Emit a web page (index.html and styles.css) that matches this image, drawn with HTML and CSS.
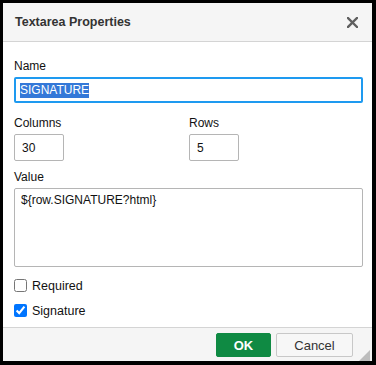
FILE: index.html
```html
<!DOCTYPE html>
<html>
<head>
    <title>Textarea Properties</title>
    <link rel="stylesheet" href="styles.css">
</head>
<body>
    <div class="dialog">
        <div class="dialog-header">
            <span class="dialog-title">Textarea Properties</span>
            <span class="dialog-close">
                <svg width="11" height="11" viewBox="0 0 11 11">
                    <path d="M1 1 L10 10 M10 1 L1 10" stroke="#5f5f5f" stroke-width="2.4" stroke-linecap="square"/>
                </svg>
            </span>
        </div>

        <div class="dialog-body">
            <div class="field">
                <label class="field-label">Name</label>
                <div class="text-input focused"><span class="selected">SIGNATURE</span></div>
            </div>

            <div class="field-row">
                <div class="field">
                    <label class="field-label">Columns</label>
                    <input class="small-input" type="text" value="30">
                </div>
                <div class="field">
                    <label class="field-label">Rows</label>
                    <input class="small-input" type="text" value="5">
                </div>
            </div>

            <div class="field value-field">
                <label class="field-label">Value</label>
                <textarea class="value-input">${row.SIGNATURE?html}</textarea>
            </div>

            <label class="check-row first">
                <input type="checkbox">
                <span>Required</span>
            </label>
            <label class="check-row">
                <input type="checkbox" checked>
                <span>Signature</span>
            </label>
        </div>

        <div class="dialog-footer">
            <button class="btn btn-ok">OK</button>
            <button class="btn btn-cancel">Cancel</button>
        </div>

        <div class="resize-grip"></div>
    </div>
</body>
</html>
```

FILE: styles.css
```css
* {
    box-sizing: border-box;
}
body {
    margin: 0;
    width: 376px;
    height: 365px;
    padding: 3px 4px 4px 3px;
    background: #000;
    font-family: "Liberation Sans", Arial, sans-serif;
    font-size: 12px;
    color: #111;
}
.dialog {
    position: relative;
    height: 358px;
    background: #fff;
    display: flex;
    flex-direction: column;
}
.dialog-header {
    height: 39px;
    flex: none;
    display: flex;
    align-items: center;
    justify-content: space-between;
    padding: 0 14px 0 12px;
    background: #f5f5f5;
    border-bottom: 1px solid #d4d4d4;
}
.dialog-title {
    font-size: 12.5px;
    font-weight: bold;
    color: #333;
}
.dialog-close {
    display: flex;
    width: 11px;
    height: 11px;
}
.dialog-body {
    flex: 1;
    padding: 17px 9px 0 11px;
}
.field-label {
    display: block;
    line-height: 15px;
    margin-bottom: 3px;
    color: #111;
}
.text-input {
    height: 26px;
    padding: 0 5px;
    display: flex;
    align-items: center;
    border: 1px solid #b5b5b5;
    border-radius: 2px;
}
.text-input.focused {
    border: 2px solid #1e9af0;
    padding: 0 4px;
}
.selected {
    background: #3478d8;
    color: #fff;
    line-height: 15px;
}
.field-row {
    display: grid;
    grid-template-columns: 175px 1fr;
    margin-top: 13px;
}
.small-input {
    display: block;
    width: 50px;
    height: 27px;
    padding: 0 7px;
    border: 1px solid #b5b5b5;
    border-radius: 2px;
    font-family: inherit;
    font-size: 12px;
    color: #111;
    outline: none;
}
.value-field {
    margin-top: 9px;
}
.value-input {
    display: block;
    width: 100%;
    height: 79px;
    padding: 4px 6px;
    border: 1px solid #b5b5b5;
    border-radius: 2px;
    font-family: inherit;
    font-size: 12px;
    line-height: 15px;
    color: #111;
    resize: none;
    outline: none;
}
.check-row {
    display: flex;
    align-items: center;
    gap: 5px;
    height: 13px;
    margin-top: 12px;
    font-size: 12.5px;
}
.check-row input {
    width: 13px;
    height: 13px;
    margin: 0;
}
.dialog-footer {
    height: 34px;
    flex: none;
    display: flex;
    justify-content: flex-end;
    gap: 5px;
    padding: 5px 19px 0 0;
    background: #f5f5f5;
    border-top: 1px solid #d4d4d4;
}
.btn {
    height: 24px;
    border-radius: 2px;
    font-family: inherit;
    font-size: 13px;
    cursor: pointer;
}
.btn-ok {
    width: 55px;
    background: #0f8a43;
    border: 1px solid #0f8a43;
    color: #fff;
    font-weight: bold;
}
.btn-cancel {
    width: 77px;
    background: #f7f7f7;
    border: 1px solid #c8c8c8;
    color: #333;
}
.resize-grip {
    position: absolute;
    right: 2px;
    bottom: 0;
    width: 0;
    height: 0;
    border-left: 11px solid transparent;
    border-bottom: 11px solid #bdbdbd;
}
```
